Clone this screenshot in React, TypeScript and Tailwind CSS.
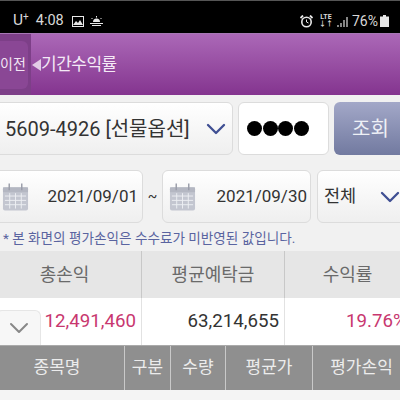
import React from 'react';
import { ChevronDown } from 'lucide-react';

const fontStack = { fontFamily: 'Roboto, "Noto Sans CJK KR", sans-serif' };

const CalendarIcon = () => (
  <svg width="27" height="30" viewBox="0 0 28 30" className="shrink-0">
    <rect x="1" y="5" width="26" height="24" rx="2" fill="#c3c6d0" />
    <rect x="1" y="5" width="26" height="5" fill="#b4b7c2" />
    <path d="M3 14h22M3 18.500h22M3 23h22M8 11v16M14 11v16M20 11v16" stroke="#eceef2" strokeWidth="1" />
    <path d="M7.500 1v7M20.500 1v7" stroke="#9a9da9" strokeWidth="1.500" />
  </svg>
);

const Field = ({ className, children }: { className: string; children: React.ReactNode }) => (
  <div className={`flex h-[53px] items-center rounded-[6px] border border-[#dcdcdc] ${className}`}>{children}</div>
);

const StatusBar = () => (
  <div className="flex h-[33px] items-center justify-between border-t border-[#555] bg-black pt-[8px] pr-[11px] pl-[13px] text-[#d8d8d8]">
    <div className="flex items-center">
      <span className="text-[15.500px] leading-none">
        U<sup className="text-[10px]">+</sup>
      </span>
      <span className="ml-[7px] text-[14.500px] leading-none">4:08</span>
      <svg width="12" height="11" viewBox="0 0 12 11" className="ml-[8px]">
        <rect x="0.500" y="0.500" width="11" height="10" fill="none" stroke="#e8e8e8" />
        <path d="M1 9l3-4 2 2 2-3 3 5z" fill="#e8e8e8" />
      </svg>
      <svg width="13" height="10" viewBox="0 0 13 10" className="ml-[6px]">
        <path d="M3 6a3.500 3.500 0 0 1 7 0z" fill="#e8e8e8" />
        <path d="M0 7.500h13M2 9.500h9M6.500 0v1.500M1.500 2l1 1M11.500 2l-1 1" stroke="#e8e8e8" />
      </svg>
    </div>
    <div className="flex items-center">
      <svg width="13" height="13" viewBox="0 0 13 13">
        <circle cx="6.500" cy="7" r="4.700" fill="none" stroke="#e8e8e8" strokeWidth="1.600" />
        <path d="M6.500 4.500V7l2 1" fill="none" stroke="#e8e8e8" />
        <path d="M0.500 3l2.500-2.500M12.500 3L10 0.500" stroke="#e8e8e8" strokeWidth="1.800" />
      </svg>
      <div className="ml-[6px] flex flex-col items-center text-[7px] leading-[7px] font-bold">
        <span>LTE</span>
        <span>↓↑</span>
      </div>
      <svg width="11" height="11" viewBox="0 0 11 11" className="ml-[4px]">
        <path d="M1 9v2M4 7v4M7 4v7M10 1v10" stroke="#dedede" strokeWidth="1.200" />
      </svg>
      <span className="ml-[4px] text-[14px] leading-none">76%</span>
      <svg width="9" height="12" viewBox="0 0 9 12" className="ml-[2px]">
        <path d="M3 0h3v1.500h3V12H0V1.500h3z" fill="#e6e6e6" />
      </svg>
    </div>
  </div>
);

const Header = () => (
  <div className="flex h-[62px] items-center border-t border-[#a777b5] bg-gradient-to-b from-[#ab68b7] to-[#84348f]">
    <div className="flex h-full w-[31px] shrink-0 items-center bg-[#7d3f88]">
      <div className="flex h-[48px] w-[28px] items-center overflow-hidden rounded-r-[6px] bg-[#8a4795] text-[14px] whitespace-nowrap text-[#f2e6f4]">
        이전
      </div>
    </div>
    <span className="ml-[1px] h-0 w-0 border-y-[6px] border-r-[9px] border-y-transparent border-r-[#e2cbe6]" />
    <span className="text-[17px] tracking-[-0.500px] text-[#f4eaf6]">기간수익률</span>
  </div>
);

export default function App() {
  return (
    <div className="flex h-[400px] w-[400px] flex-col overflow-hidden bg-[#f1f1f1]" style={fontStack}>
      <StatusBar />
      <Header />

      {/* Account row */}
      <div className="mt-[7px] flex gap-[5px]">
        <Field className="ml-[-6px] w-[239px] shrink-0 justify-between bg-gradient-to-b from-[#ffffff] to-[#efefef] pl-[10px]">
          <span className="text-[20px] whitespace-nowrap text-[#333]">5609-4926 [선물옵션]</span>
          <ChevronDown size={32} strokeWidth={1.750} className="text-[#3f4f93]" />
        </Field>
        <Field className="w-[91px] shrink-0 gap-[0.500px] bg-white pl-[8px]">
          <span className="h-[15px] w-[15px] rounded-full bg-black" />
          <span className="h-[15px] w-[15px] rounded-full bg-black" />
          <span className="h-[15px] w-[15px] rounded-full bg-black" />
          <span className="h-[15px] w-[15px] rounded-full bg-black" />
        </Field>
        <div className="flex h-[53px] w-[80px] shrink-0 items-center rounded-[6px] bg-gradient-to-b from-[#a3a8c8] to-[#727aa0] pl-[18px] text-[20px] text-[#eef0f6]">
          조회
        </div>
      </div>

      {/* Date row */}
      <div className="mt-[15px] flex items-center">
        <Field className="ml-[-6px] w-[149px] shrink-0 justify-between bg-gradient-to-b from-[#ffffff] to-[#efefef] pr-[4px] pl-[7px]">
          <CalendarIcon />
          <span className="text-[17px] text-[#333]">2021/09/01</span>
        </Field>
        <span className="w-[19px] shrink-0 text-center text-[14px] text-[#333]">~</span>
        <Field className="w-[149px] shrink-0 justify-between bg-gradient-to-b from-[#ffffff] to-[#efefef] pr-[3px] pl-[6px]">
          <CalendarIcon />
          <span className="text-[17px] text-[#333]">2021/09/30</span>
        </Field>
        <Field className="ml-[6px] w-[90px] shrink-0 justify-between bg-gradient-to-b from-[#ffffff] to-[#efefef] pl-[6px]">
          <span className="text-[17.500px] text-[#333]">전체</span>
          <ChevronDown size={32} strokeWidth={1.750} className="text-[#3f4f93]" />
        </Field>
      </div>

      <p className="mt-[6px] h-[22px] pl-[3px] text-[13.600px] leading-[18px] whitespace-nowrap text-[#5a64a0]">
        * 본 화면의 평가손익은 수수료가 미반영된 값입니다.
      </p>

      {/* Summary table */}
      <div className="flex h-[47px] bg-[#e6e6e6] text-[18px] text-[#6a6a6a]">
        <div className="flex w-[142px] shrink-0 items-center justify-center border-r border-[#c8c8c8] pr-[12px]">총손익</div>
        <div className="flex w-[143px] shrink-0 items-center justify-center border-r border-[#c8c8c8]">평균예탁금</div>
        <div className="flex flex-1 items-center justify-center pl-[10px]">수익률</div>
      </div>
      <div className="flex h-[47px] bg-white text-[18.700px]">
        <div className="flex w-[142px] shrink-0 items-center justify-between border-r border-[#e2e2e2] pr-[5px] text-[#c8376f]">
          <div className="ml-[-4px] flex h-[35px] w-[45px] shrink-0 items-center justify-center self-end rounded-t-[6px] border border-b-0 border-[#e6e6e6] bg-[#f7f7f7]">
            <ChevronDown size={32} strokeWidth={1.500} className="text-[#888]" />
          </div>
          <span>12,491,460</span>
        </div>
        <div className="flex w-[143px] shrink-0 items-center justify-end border-r border-[#e2e2e2] pr-[5px] text-[#333]">
          63,214,655
        </div>
        <div className="flex min-w-0 flex-1 items-center pl-[61px] whitespace-nowrap text-[#c8376f]">19.76%</div>
      </div>

      {/* Position list header */}
      <div className="flex h-[45px] border-t border-[#aaa] bg-[#8f8f8f] text-[17px] text-[#ececec]">
        <div className="flex w-[125px] shrink-0 items-center justify-center border-r border-[#c9c9c9] pr-[10px]">종목명</div>
        <div className="flex w-[46px] shrink-0 items-center justify-center border-r border-[#c9c9c9]">구분</div>
        <div className="flex w-[55px] shrink-0 items-center justify-center border-r border-[#c9c9c9]">수량</div>
        <div className="flex w-[87px] shrink-0 items-center justify-center border-r border-[#c9c9c9]">평균가</div>
        <div className="flex flex-1 items-center justify-center pl-[10px] whitespace-nowrap">평가손익</div>
      </div>
      <div className="flex-1 bg-[#f4f4f4]" />
    </div>
  );
}
